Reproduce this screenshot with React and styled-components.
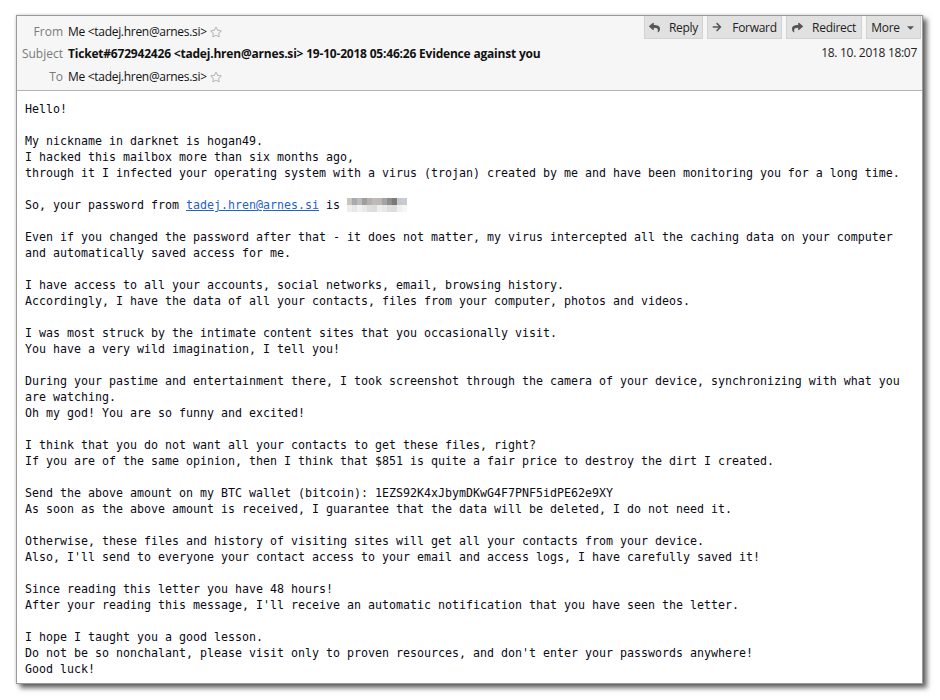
import React from 'react'
import styled, { createGlobalStyle } from 'styled-components'
import { FaReply, FaArrowRight, FaShare, FaCaretDown, FaRegStar } from 'react-icons/fa'

const GlobalStyle = createGlobalStyle`
    html, body {
        margin: 0;
        padding: 0;
        background: #ffffff;
    }
    body {
        font-family: "Open Sans", "Noto Sans", sans-serif;
    }
`

const Page = styled.div`
    width: 940px;
    height: 700px;
    padding: 15px 0 0 16px;
    box-sizing: border-box;
`

const Card = styled.div`
    width: 907px;
    height: 669px;
    box-sizing: border-box;
    background: #ffffff;
    border: 1px solid #9a9a9a;
    box-shadow: 4px 4px 5px rgba(0, 0, 0, 0.6), 0 0 3px rgba(0, 0, 0, 0.2);
    display: flex;
    flex-direction: column;
    overflow: hidden;
`

const Header = styled.div`
    display: flex;
    justify-content: space-between;
    background: #f6f6f6;
    border-bottom: 1px solid #b4b4b4;
    padding: 0 0 1px 0;
    font-size: 12px;
`

const Fields = styled.div`
    display: flex;
    flex-direction: column;
    padding-top: 4px;
`

const Field = styled.div`
    display: flex;
    align-items: center;
    height: ${p => p.h || 23}px;
    line-height: ${p => p.h || 23}px;
`

const Label = styled.span`
    width: 46px;
    text-align: right;
    color: #7a7a7a;
    margin-right: 5px;
`

const Value = styled.span`
    color: #111;
    font-weight: ${p => (p.bold ? 700 : 400)};
    letter-spacing: ${p => (p.bold ? '-0.2px' : '-0.3px')};
    white-space: nowrap;
`

const Star = styled.span`
    display: inline-flex;
    margin-left: 3px;
    color: #b8b8b8;
    font-size: 12px;
`

const Side = styled.div`
    display: flex;
    flex-direction: column;
    align-items: flex-end;
`

const Toolbar = styled.div`
    display: flex;
    gap: 4px;
    margin-right: 1px;
`

const ToolButton = styled.div`
    display: flex;
    align-items: center;
    justify-content: center;
    gap: ${p => p.gap || 9}px;
    width: ${p => p.w}px;
    height: 23px;
    box-sizing: border-box;
    background: #e1e1e1;
    border: 1px solid #d2d2d2;
    border-top: none;
    color: #222;
    font-size: 12px;
    letter-spacing: -0.3px;
    & svg {
        color: #555;
        flex: none;
    }
`

const DateLine = styled.div`
    margin-top: 2px;
    margin-right: 5px;
    height: 23px;
    line-height: 23px;
    color: #222;
    letter-spacing: -0.3px;
`

const Body = styled.div`
    padding: 10px 0 0 8px;
    font-family: "DejaVu Sans Mono", "Liberation Mono", monospace;
    font-size: 11.64px;
    line-height: 16px;
    color: #0a0a14;
    white-space: pre;
`

const Link = styled.a`
    color: #1f63c6;
    text-decoration: underline;
`

const Pixelated = styled.span`
    display: inline-grid;
    grid-template-columns: repeat(12, 5px);
    grid-auto-rows: 7px;
    vertical-align: top;
    margin-top: 1px;
`

const Pixel = styled.span`
    background: ${p => p.c};
`

const topRow = ['#c9c5c1', '#a9aaab', '#bcbbbb', '#a19d98', '#b3b0ae', '#bbbbbe', '#c3b6b2', '#a1a5a9', '#8f8c89', '#7a7a7b', '#c4c9d1', '#c7cbd2']
const bottomRow = ['#eeeeee', '#e5e7e9', '#f1f1f1', '#e9e9e9', '#dfdfdf', '#dcdcdc', '#ededed', '#e8e8e8', '#e0dde0', '#dcdcdc', '#efefef', '#f6f6f6']

const Redacted = () => (
    <Pixelated>
        {[...topRow, ...bottomRow].map((c, i) => <Pixel key={i} c={c} />)}
    </Pixelated>
)

const text1 = `Hello!

My nickname in darknet is hogan49.
I hacked this mailbox more than six months ago,
through it I infected your operating system with a virus (trojan) created by me and have been monitoring you for a long time.

So, your password from `

const text2 = `

Even if you changed the password after that - it does not matter, my virus intercepted all the caching data on your computer
and automatically saved access for me.

I have access to all your accounts, social networks, email, browsing history.
Accordingly, I have the data of all your contacts, files from your computer, photos and videos.

I was most struck by the intimate content sites that you occasionally visit.
You have a very wild imagination, I tell you!

During your pastime and entertainment there, I took screenshot through the camera of your device, synchronizing with what you
are watching.
Oh my god! You are so funny and excited!

I think that you do not want all your contacts to get these files, right?
If you are of the same opinion, then I think that $851 is quite a fair price to destroy the dirt I created.

Send the above amount on my BTC wallet (bitcoin): 1EZS92K4xJbymDKwG4F7PNF5idPE62e9XY
As soon as the above amount is received, I guarantee that the data will be deleted, I do not need it.

Otherwise, these files and history of visiting sites will get all your contacts from your device.
Also, I'll send to everyone your contact access to your email and access logs, I have carefully saved it!

Since reading this letter you have 48 hours!
After your reading this message, I'll receive an automatic notification that you have seen the letter.

I hope I taught you a good lesson.
Do not be so nonchalant, please visit only to proven resources, and don't enter your passwords anywhere!
Good luck!`

const App = () => {
    return (
        <Page>
            <GlobalStyle />
            <Card>
                <Header>
                    <Fields>
                        <Field>
                            <Label>From</Label>
                            <Value>Me &lt;tadej.hren@arnes.si&gt;</Value>
                            <Star><FaRegStar size={12} /></Star>
                        </Field>
                        <Field h={22}>
                            <Label>Subject</Label>
                            <Value bold>Ticket#672942426 &lt;tadej.hren@arnes.si&gt; 19-10-2018 05:46:26 Evidence against you</Value>
                        </Field>
                        <Field h={24}>
                            <Label>To</Label>
                            <Value>Me &lt;tadej.hren@arnes.si&gt;</Value>
                            <Star><FaRegStar size={12} /></Star>
                        </Field>
                    </Fields>
                    <Side>
                        <Toolbar>
                            <ToolButton w={59}><FaReply size={11} />Reply</ToolButton>
                            <ToolButton w={75} gap={10}><FaArrowRight size={10} />Forward</ToolButton>
                            <ToolButton w={76}><FaShare size={11} />Redirect</ToolButton>
                            <ToolButton w={55} gap={5}>More<FaCaretDown size={11} /></ToolButton>
                        </Toolbar>
                        <DateLine>18. 10. 2018 18:07</DateLine>
                    </Side>
                </Header>
                <Body>
                    {text1}
                    <Link href="#">tadej.hren@arnes.si</Link>
                    {' is '}
                    <Redacted />
                    {text2}
                </Body>
            </Card>
        </Page>
    )
}

export default App
